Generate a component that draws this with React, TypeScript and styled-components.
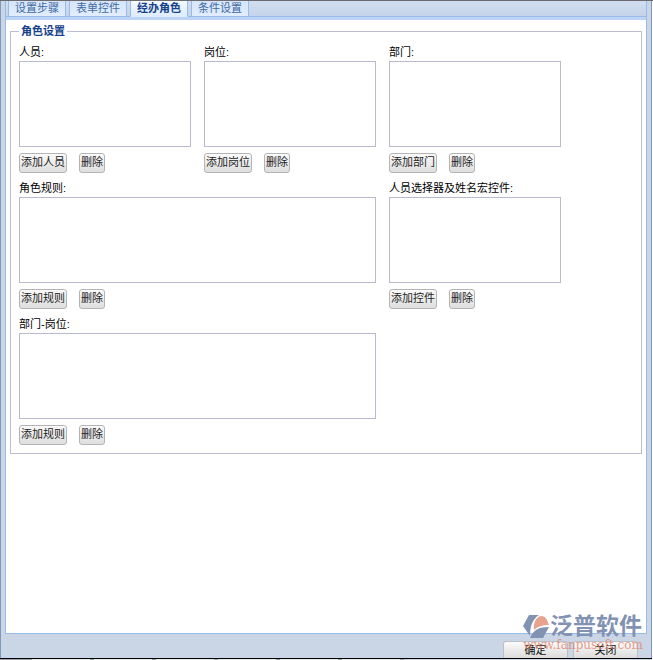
import React from "react";
import styled, { createGlobalStyle, css } from "styled-components";

const Global = createGlobalStyle`
  *, *::before, *::after { box-sizing: border-box; }
  body { margin: 0; background: #fff; }
  body, button, textarea {
    font-family: "Liberation Sans", "Noto Sans CJK SC", sans-serif;
    font-size: 11px;
    line-height: 14px;
  }
`;

const Page = styled.div`
  display: flex;
  flex-direction: column;
  min-height: 100vh;
  padding-right: 1px;
  border-top: 1px solid #6c6a6c;
`;

const Window = styled.main`
  position: relative;
  flex: 1;
  display: flex;
  flex-direction: column;
  padding: 0 4px;
  background: #cad6e6;
  border-left: 1px solid #8098bb;
  border-right: 1px solid #8098bb;
`;

const Frame = styled.div`
  flex: 1;
  display: flex;
  flex-direction: column;
  background: #fff;
  border: 1px solid #99bbe8;
  border-top: 0;
`;

const TabStrip = styled.div`
  display: flex;
  gap: 3px;
  height: 19px;
  padding: 0 2px;
  background: linear-gradient(#d2def0, #c3d3ea);
  border-bottom: 3px solid #bcd5f5;
  box-shadow: inset 0 -1px #99bbe8;
`;

const Tab = styled.button<{ $active?: boolean }>`
  height: 16px;
  padding: 0 6px 3px;
  color: #416aa3;
  white-space: nowrap;
  background: linear-gradient(#d6e5fa, #e2edfc);
  border: 1px solid #99bbe8;
  border-width: 0 1px 1px;
  ${(p) =>
    p.$active &&
    css`
      color: #15428b;
      font-weight: bold;
      background: linear-gradient(#f4f9ff, #deecfd);
      border-bottom-color: #deecfd;
    `}
`;

const Body = styled.div`
  flex: 1;
  padding: 4px;
`;

const RoleSet = styled.fieldset`
  min-width: 0;
  margin: 0;
  padding: 7px 8px 8px;
  border: 1px solid #bdbdd2;
`;

const Legend = styled.legend`
  padding: 0 2px;
  color: #15428b;
  font-weight: bold;
`;

const Row = styled.div`
  display: grid;
  grid-template-columns: repeat(3, minmax(0, 172fr)) 59fr;
  gap: 13px;

  & + & {
    margin-top: 8px;
  }
`;

const Cell = styled.div<{ $wide?: boolean }>`
  display: flex;
  flex-direction: column;
  grid-column: ${(p) => (p.$wide ? "1 / span 2" : "auto")};
`;

const Label = styled.label`
  margin-bottom: 2px;
  color: #000;
`;

const ListBox = styled.textarea`
  width: 100%;
  height: 86px;
  resize: none;
  background: #fff;
  border: 1px solid #b9bacd;
  outline: none;
`;

const Actions = styled.div`
  display: flex;
  gap: 12px;
  margin-top: 6px;
`;

const SmallButton = styled.button`
  height: 20px;
  padding: 0 1px 2px;
  color: #222;
  white-space: nowrap;
  background: linear-gradient(#fafafa, #dedede);
  border: 1px solid #b4b4b4;
  border-radius: 3px;
`;

const Footer = styled.footer`
  display: flex;
  justify-content: flex-end;
  gap: 5px;
  padding: 7px 9px 0;
`;

const FooterButton = styled.button`
  width: 65px;
  height: 17px;
  padding: 0;
  color: #111;
  background: linear-gradient(#fbfbfb, #dcdcdc);
  border: 1px solid #bcc0c6;
  border-bottom: 0;
  border-radius: 3px 3px 0 0;
`;

const Edge = styled.div`
  display: flex;
  gap: 4px;
  height: 2px;
  padding-left: 32px;
  background: #9aa4b3;
  border-top: 1px solid #000;
`;

const EdgeCell = styled.div<{ $rest?: boolean }>`
  width: 58px;
  background: #e6ebf2;
  ${(p) =>
    p.$rest &&
    css`
      flex: 1;
      background: #cad6e6;
    `}
`;

const Watermark = styled.div`
  position: absolute;
  right: 8px;
  bottom: 7px;
  width: 120px;
  pointer-events: none;
`;

const Brand = styled.div`
  display: flex;
  align-items: center;
  gap: 1px;
  color: #8292b3;
  font-size: 23px;
  font-weight: bold;
  line-height: 25px;
  white-space: nowrap;
`;

const Site = styled.div`
  display: flex;
  justify-content: center;
  color: rgba(226, 130, 105, 0.8);
  font-family: "DejaVu Serif", serif;
  font-size: 12px;
  line-height: 12px;
  white-space: nowrap;
`;

type PickerProps = { id: string; label: string; add: string; wide?: boolean };

function Picker({ id, label, add, wide }: PickerProps) {
  return (
    <Cell $wide={wide}>
      <Label htmlFor={id}>{label}:</Label>
      <ListBox id={id} readOnly />
      <Actions>
        <SmallButton type="button">{add}</SmallButton>
        <SmallButton type="button">删除</SmallButton>
      </Actions>
    </Cell>
  );
}

export default function App() {
  return (
    <Page>
      <Global />
      <Window>
        <Frame>
          <TabStrip role="tablist">
            <Tab role="tab">设置步骤</Tab>
            <Tab role="tab">表单控件</Tab>
            <Tab role="tab" aria-selected $active>经办角色</Tab>
            <Tab role="tab">条件设置</Tab>
          </TabStrip>
          <Body>
            <RoleSet>
              <Legend>角色设置</Legend>
              <Row>
                <Picker id="people" label="人员" add="添加人员" />
                <Picker id="posts" label="岗位" add="添加岗位" />
                <Picker id="departments" label="部门" add="添加部门" />
              </Row>
              <Row>
                <Picker id="rules" label="角色规则" add="添加规则" wide />
                <Picker id="controls" label="人员选择器及姓名宏控件" add="添加控件" />
              </Row>
              <Row>
                <Picker id="department-posts" label="部门-岗位" add="添加规则" wide />
              </Row>
            </RoleSet>
          </Body>
        </Frame>
        <Footer>
          <FooterButton type="button">确定</FooterButton>
          <FooterButton type="button">关闭</FooterButton>
        </Footer>
        <Watermark>
          <Brand>
            <svg width="26" height="25" viewBox="0 0 26 25" aria-hidden="true">
              <path d="M6 1H16C10 5 7 11 7 22L0 12Z" fill="#8292b3" />
              <path d="M11 16C10 9 13 3 18 2Q22 2 24 6L26 11C19 11 14 13 11 16Z" fill="#e6a48e" />
              <path d="M7 24C10 16 16 13 26 13L20 24Z" fill="#8292b3" />
            </svg>
            泛普软件
          </Brand>
          <Site>www.fanpusoft.com</Site>
        </Watermark>
      </Window>
      <Edge>
        <EdgeCell />
        <EdgeCell />
        <EdgeCell />
        <EdgeCell />
        <EdgeCell />
        <EdgeCell />
        <EdgeCell $rest />
      </Edge>
    </Page>
  );
}
